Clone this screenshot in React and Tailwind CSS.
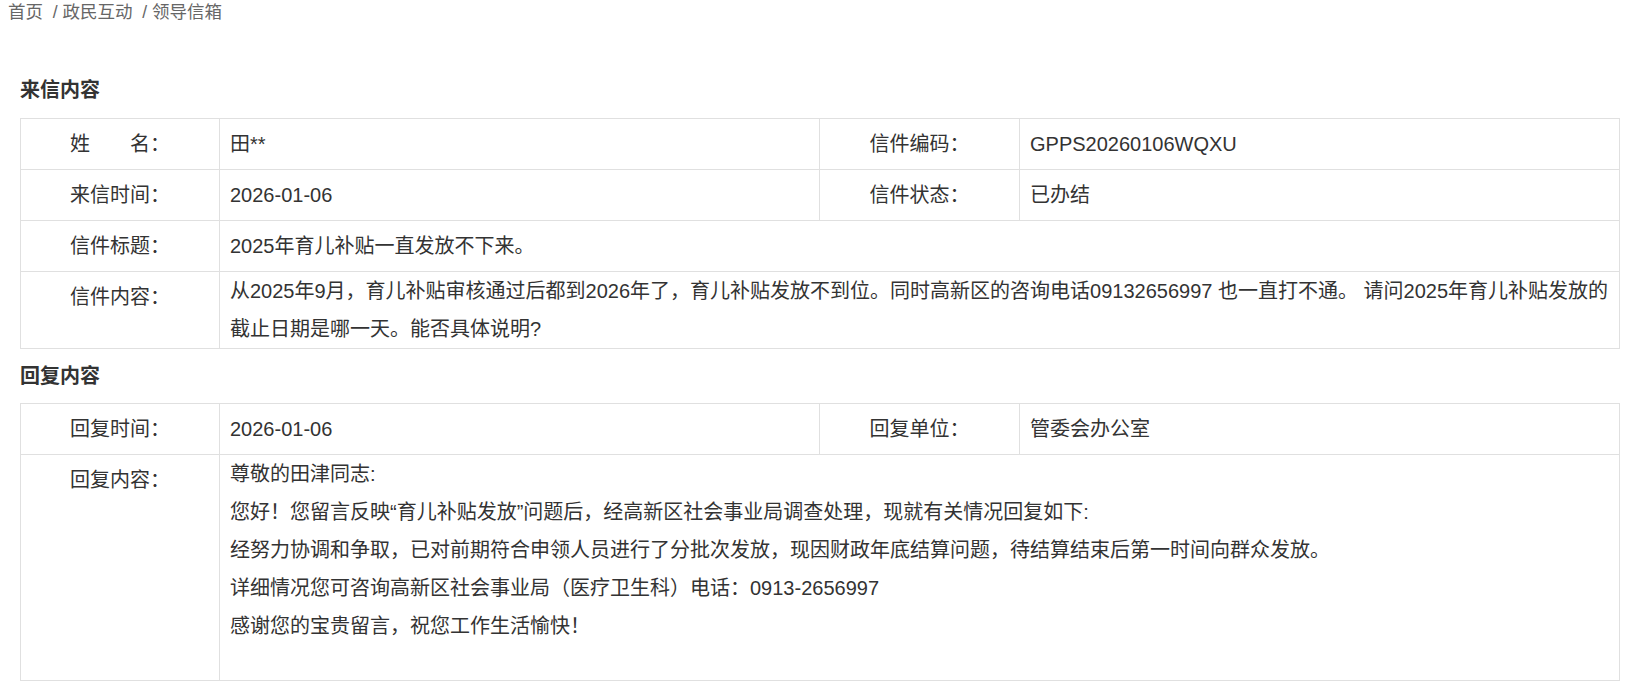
import React from "react"

const letter = {
  name: "田**",
  code: "GPPS20260106WQXU",
  time: "2026-01-06",
  status: "已办结",
  title: "2025年育儿补贴一直发放不下来。",
  content:
    "从2025年9月，育儿补贴审核通过后都到2026年了，育儿补贴发放不到位。同时高新区的咨询电话09132656997 也一直打不通。 请问2025年育儿补贴发放的截止日期是哪一天。能否具体说明?",
}

const reply = {
  time: "2026-01-06",
  unit: "管委会办公室",
  lines: [
    "尊敬的田津同志:",
    "您好！您留言反映“育儿补贴发放”问题后，经高新区社会事业局调查处理，现就有关情况回复如下:",
    "经努力协调和争取，已对前期符合申领人员进行了分批次发放，现因财政年底结算问题，待结算结束后第一时间向群众发放。",
    "详细情况您可咨询高新区社会事业局（医疗卫生科）电话：0913-2656997",
    "感谢您的宝贵留言，祝您工作生活愉快！",
  ],
}

function Label({ children, wide }) {
  return (
    <div
      className={`${wide ? "w-[200px]" : "w-[199px]"} shrink-0 border-r border-[#e0e0e0] text-center leading-[50px] self-stretch`}
    >
      {children}
    </div>
  )
}

// fila de dos pares label / valor
function PairRow({ l1, v1, l2, v2 }) {
  return (
    <div className="flex border-b border-[#e0e0e0] h-[51px]">
      <Label>{l1}</Label>
      <div className="w-[600px] shrink-0 border-r border-[#e0e0e0] px-[10px] leading-[50px]">{v1}</div>
      <Label wide>{l2}</Label>
      <div className="flex-1 px-[10px] leading-[50px]">{v2}</div>
    </div>
  )
}

function FullRow({ label, children, last, multi, className = "" }) {
  return (
    <div className={`flex ${last ? "" : "border-b border-[#e0e0e0]"} ${className}`}>
      <Label>{label}</Label>
      <div className={`flex-1 px-[10px] ${multi ? "leading-[38px]" : "leading-[50px]"}`}>{children}</div>
    </div>
  )
}

function Heading({ children, className = "h-[55px] leading-[55px]" }) {
  return <h2 className={`${className} text-[20px] font-bold text-[#333]`}>{children}</h2>
}

export default function App() {
  return (
    <div
      className="bg-white text-[#333] text-[20px] min-h-screen"
      style={{ fontFamily: '"Liberation Sans", "Noto Sans CJK SC", sans-serif' }}
    >
      <nav className="pl-[8px] text-[17.5px] leading-[24px] text-[#666]">
        首页 &nbsp;/ 政民互动 &nbsp;/ 领导信箱
      </nav>
      <main className="ml-[20px] w-[1600px] mt-[39px]">
        <Heading>来信内容</Heading>
        <section className="border border-[#e0e0e0]">
          <PairRow l1="姓　　名：" v1={letter.name} l2="信件编码：" v2={letter.code} />
          <PairRow l1="来信时间：" v1={letter.time} l2="信件状态：" v2={letter.status} />
          <FullRow label="信件标题：" className="h-[51px]">{letter.title}</FullRow>
          <FullRow label="信件内容：" multi last>
            {letter.content}
          </FullRow>
        </section>
        <Heading className="h-[54px] leading-[54px]">回复内容</Heading>
        <section className="border border-[#e0e0e0]">
          <PairRow l1="回复时间：" v1={reply.time} l2="回复单位：" v2={reply.unit} />
          <FullRow label="回复内容：" multi last className="min-h-[225px]">
            {reply.lines.map((line) => (
              <p key={line}>{line}</p>
            ))}
          </FullRow>
        </section>
      </main>
    </div>
  )
}
